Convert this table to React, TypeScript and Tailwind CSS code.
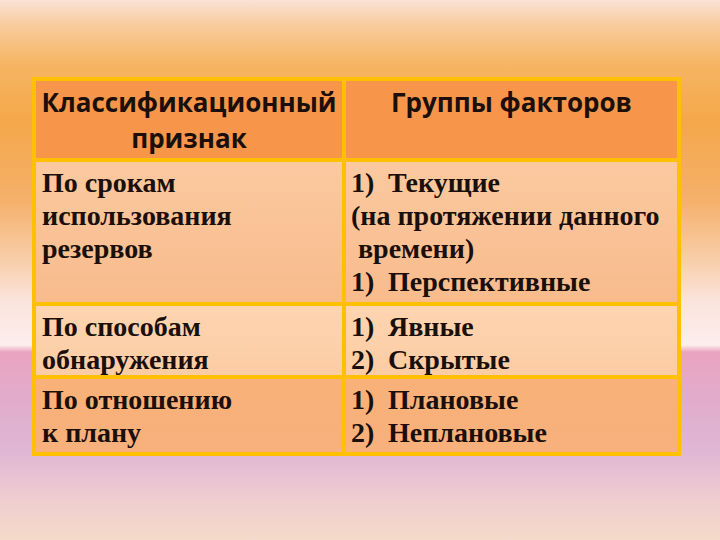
import React from "react";

const serif = "font-['Liberation_Serif',serif] font-bold text-[28px] leading-[33px] text-[#1a0f0a]";

function Items({ items }: { items: [string, string][] }) {
  return (
    <div className="flex flex-col">
      {items.map(([n, t], i) => (
        <div key={i} className="flex">
          <span className="w-[37px] shrink-0">{n}</span>
          <span>{t}</span>
        </div>
      ))}
    </div>
  );
}

export default function App() {
  return (
    <div className="w-[720px] h-[540px] overflow-hidden pt-[77px] pl-[32px] bg-[linear-gradient(180deg,#fae2d6_0px,#f8cc9e_25px,#f6b462_65px,#f4a84a_120px,#f5b06a_200px,#f8ceaa_260px,#fbe3dc_300px,#fdeeee_345px,#e9a4bf_352px,#e1accc_400px,#dfb6d4_450px,#efcdd0_500px,#f5dbca_540px)]">
      <div className="w-[649px] grid grid-cols-[306px_331px] grid-rows-[77px_140px_69px_73px] gap-[4px] p-[4px] bg-[#ffc000]">
        <div className="bg-[#f7964a] pt-[3px] text-center font-['Open_Sans',sans-serif] font-bold text-[26px] leading-[36px] text-[#1a0f0a]">
          Классификационный признак
        </div>
        <div className="bg-[#f7964a] pt-[3px] text-center font-['Open_Sans',sans-serif] font-bold text-[26px] leading-[36px] text-[#1a0f0a]">
          Группы факторов
        </div>

        <div className={`bg-[linear-gradient(180deg,#fbc9a0,#f8bb8c)] pl-[6px] pt-[4px] ${serif}`}>
          <div>По срокам</div>
          <div>использования</div>
          <div>резервов</div>
        </div>
        <div className={`bg-[linear-gradient(180deg,#fbc9a0,#f8bb8c)] pl-[5px] pt-[4px] ${serif}`}>
          <Items items={[["1)", "Текущие"]]} />
          <div>(на протяжении данного</div>
          <div className="whitespace-pre"> времени)</div>
          <Items items={[["1)", "Перспективные"]]} />
        </div>

        <div className={`bg-[linear-gradient(180deg,#fdd5b0,#fccca4)] pl-[6px] pt-[4px] ${serif}`}>
          <div>По способам</div>
          <div>обнаружения</div>
        </div>
        <div className={`bg-[linear-gradient(180deg,#fdd5b0,#fccca4)] pl-[5px] pt-[4px] ${serif}`}>
          <Items items={[["1)", "Явные"], ["2)", "Скрытые"]]} />
        </div>

        <div className={`bg-[linear-gradient(180deg,#f9b179,#f8b07c)] pl-[6px] pt-[4px] ${serif}`}>
          <div>По отношению</div>
          <div>к плану</div>
        </div>
        <div className={`bg-[linear-gradient(180deg,#f9b179,#f8b07c)] pl-[5px] pt-[4px] ${serif}`}>
          <Items items={[["1)", "Плановые"], ["2)", "Неплановые"]]} />
        </div>
      </div>
    </div>
  );
}
